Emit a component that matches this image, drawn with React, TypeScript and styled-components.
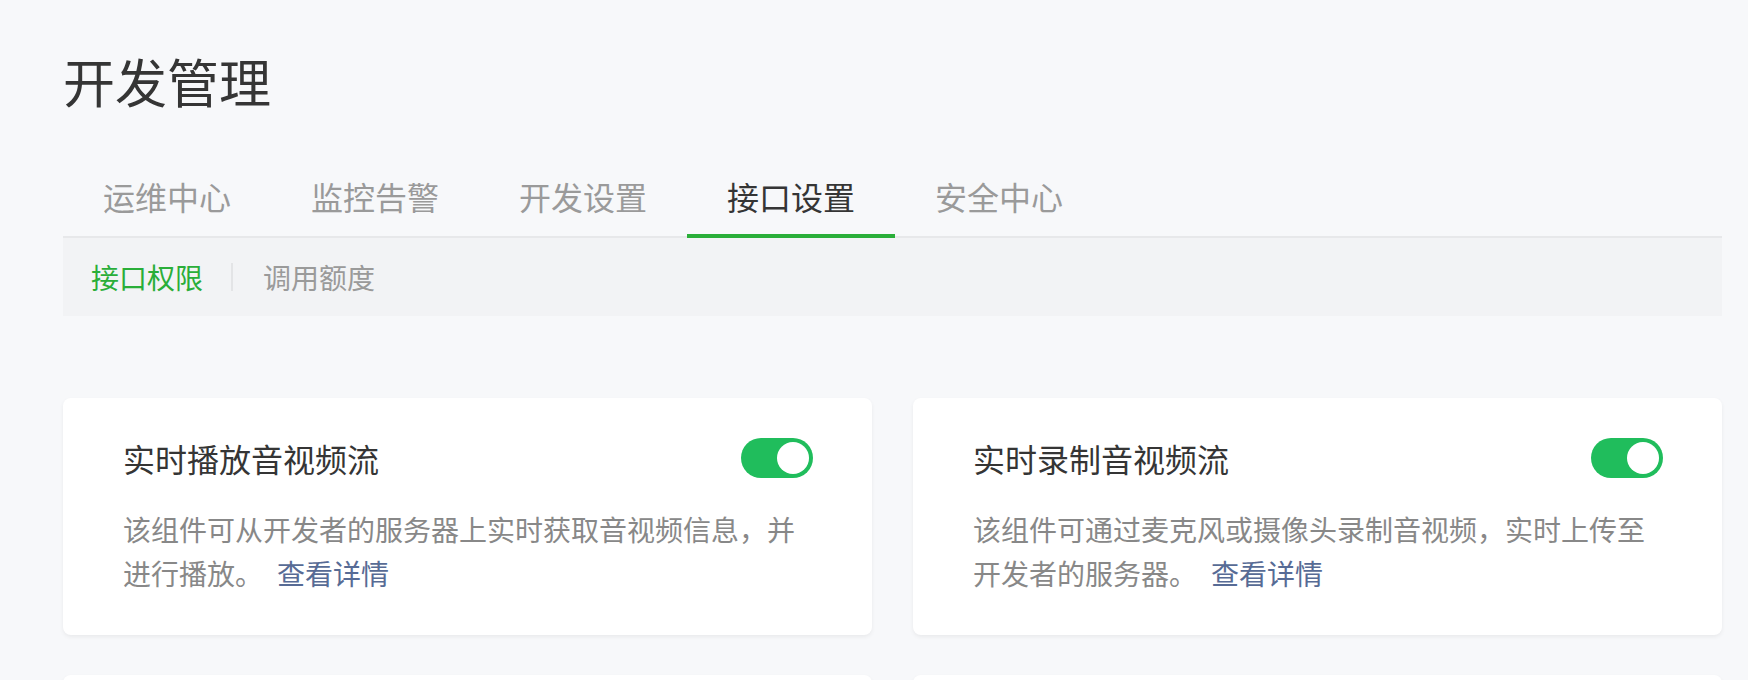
import React from "react";
import styled, { createGlobalStyle } from "styled-components";

const GlobalStyle = createGlobalStyle`
  html, body {
    margin: 0;
    padding: 0;
    background: #f7f8fa;
    font-family: "Noto Sans CJK SC", "Noto Sans", sans-serif;
    -webkit-font-smoothing: antialiased;
  }
  * { box-sizing: border-box; }
`;

const Page = styled.div`
  padding: 55px 26px 0 63px;
  height: 680px;
  overflow: hidden;
`;

const Title = styled.h1`
  margin: 0;
  font-size: 52px;
  line-height: 52px;
  font-weight: 400;
  color: #353535;
`;

const TabList = styled.div`
  display: flex;
  margin-top: 73px;
  border-bottom: 2px solid #e7e8ea;
`;

const Tab = styled.div<{ $active?: boolean }>`
  padding: 0 40px 22px;
  margin-bottom: -2px;
  font-size: 32px;
  line-height: 32px;
  color: ${(p) => (p.$active ? "#353535" : "#9a9a9a")};
  border-bottom: 4px solid ${(p) => (p.$active ? "#2aae39" : "transparent")};
  cursor: pointer;
`;

const SubNav = styled.div`
  display: flex;
  align-items: center;
  height: 78px;
  padding-left: 28px;
  background: #f2f3f5;
`;

const SubItem = styled.div<{ $active?: boolean }>`
  font-size: 28px;
  line-height: 28px;
  color: ${(p) => (p.$active ? "#2aae39" : "#9a9a9a")};
  cursor: pointer;
`;

const SubSep = styled.span`
  width: 2px;
  height: 28px;
  margin: 0 30px 0 28px;
  background: #e3e4e6;
`;

const Grid = styled.div`
  display: grid;
  grid-template-columns: 1fr 1fr;
  column-gap: 41px;
  row-gap: 40px;
  margin-top: 82px;
`;

const Card = styled.div`
  background: #ffffff;
  border-radius: 8px;
  box-shadow: 0 2px 4px rgba(0, 0, 0, 0.06);
  padding: 40px 59px 40px 60px;
`;

const CardHeader = styled.div`
  display: flex;
  align-items: center;
  justify-content: space-between;
`;

const CardTitle = styled.div`
  font-size: 32px;
  line-height: 40px;
  color: #353535;
`;

const Toggle = styled.button<{ $on?: boolean }>`
  position: relative;
  width: 72px;
  height: 40px;
  border: none;
  padding: 0;
  border-radius: 20px;
  background: ${(p) => (p.$on ? "#20bd5c" : "#d9d9d9")};
  cursor: pointer;
  flex-shrink: 0;
`;

const Knob = styled.span<{ $on?: boolean }>`
  position: absolute;
  top: 4px;
  left: ${(p) => (p.$on ? "36px" : "4px")};
  width: 32px;
  height: 32px;
  border-radius: 50%;
  background: #ffffff;
`;

const Desc = styled.p`
  margin: 29px 0 0;
  font-size: 28px;
  line-height: 44px;
  color: #888888;
`;

const Link = styled.a`
  margin-left: 14px;
  color: #576b95;
  text-decoration: none;
  cursor: pointer;
`;

const tabs = ["运维中心", "监控告警", "开发设置", "接口设置", "安全中心"];

const cards = [
  {
    title: "实时播放音视频流",
    desc: "该组件可从开发者的服务器上实时获取音视频信息，并进行播放。",
  },
  {
    title: "实时录制音视频流",
    desc: "该组件可通过麦克风或摄像头录制音视频，实时上传至开发者的服务器。",
  },
];

export default function App() {
  return (
    <>
      <GlobalStyle />
      <Page>
        <Title>开发管理</Title>
        <TabList>
          {tabs.map((t) => (
            <Tab key={t} $active={t === "接口设置"}>
              {t}
            </Tab>
          ))}
        </TabList>
        <SubNav>
          <SubItem $active>接口权限</SubItem>
          <SubSep />
          <SubItem>调用额度</SubItem>
        </SubNav>
        <Grid>
          {cards.map((c) => (
            <Card key={c.title}>
              <CardHeader>
                <CardTitle>{c.title}</CardTitle>
                <Toggle $on aria-label={c.title}>
                  <Knob $on />
                </Toggle>
              </CardHeader>
              <Desc>
                {c.desc}
                <Link>查看详情</Link>
              </Desc>
            </Card>
          ))}
          <Card />
          <Card />
        </Grid>
      </Page>
    </>
  );
}
